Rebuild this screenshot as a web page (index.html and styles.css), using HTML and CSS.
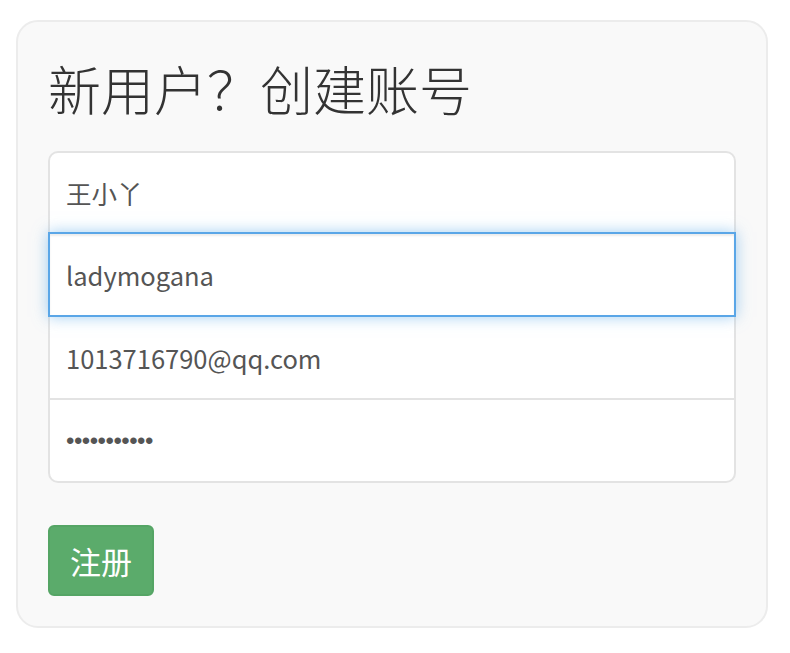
FILE: index.html
```html
<!DOCTYPE html>
<html lang="zh-CN">
<head>
<meta charset="utf-8">
<title>注册</title>
<link rel="stylesheet" href="styles.css">
</head>
<body>
<div class="card">
  <h1 class="title">新用户？创建账号</h1>
  <form class="form">
    <div class="fields">
      <input class="field" type="text" value="王小丫">
      <input class="field is-focused" type="text" value="ladymogana">
      <input class="field" type="email" value="1013716790@qq.com">
      <input class="field field-password" type="password" value="abcdefghijk">
    </div>
    <button class="btn-submit" type="button">注册</button>
  </form>
</div>
</body>
</html>
```

FILE: styles.css
```css
html, body {
  margin: 0;
  padding: 0;
  background: #ffffff;
}
body {
  padding: 20px 0 0 16px;
  font-family: "Noto Sans CJK SC", "Noto Sans", sans-serif;
}
.card {
  box-sizing: border-box;
  width: 752px;
  background: #f9f9f9;
  border: 2px solid #ececec;
  border-radius: 22px;
  padding: 37px 30px 30px 30px;
}
.title {
  margin: 0 0 34px 0;
  font-size: 53px;
  line-height: 58px;
  font-weight: 300;
  color: #333333;
}
.form {
  display: flex;
  flex-direction: column;
  align-items: flex-start;
  gap: 42px;
}
.fields {
  width: 688px;
  display: flex;
  flex-direction: column;
}
.field {
  box-sizing: border-box;
  position: relative;
  width: 100%;
  height: 85px;
  margin: -2px 0 0 0;
  padding: 0 16px;
  border: 2px solid #e3e3e3;
  border-radius: 0;
  background: #ffffff;
  font-family: "Noto Sans CJK SC", "Noto Sans", sans-serif;
  font-size: 25.5px;
  color: #555555;
  outline: none;
}
.field:first-child {
  margin-top: 0;
  height: 83px;
  border-radius: 10px 10px 0 0;
}
.field:last-child {
  border-radius: 0 0 10px 10px;
}
.field.field-password {
  font-family: "Liberation Sans", sans-serif;
  font-size: 24px;
  letter-spacing: -0.5px;
}
.field.is-focused {
  z-index: 2;
  border-color: #5aa6e7;
  box-shadow: inset 0 2px 2px rgba(0,0,0,0.075), 0 0 14px rgba(102,175,233,0.6);
}
.btn-submit {
  box-sizing: border-box;
  height: 71px;
  padding: 0 20px;
  border: 2px solid #55a565;
  border-radius: 6px;
  background: #5bab6b;
  color: #ffffff;
  font-family: "Noto Sans CJK SC", sans-serif;
  font-size: 31px;
  line-height: 1;
  cursor: pointer;
}
```
